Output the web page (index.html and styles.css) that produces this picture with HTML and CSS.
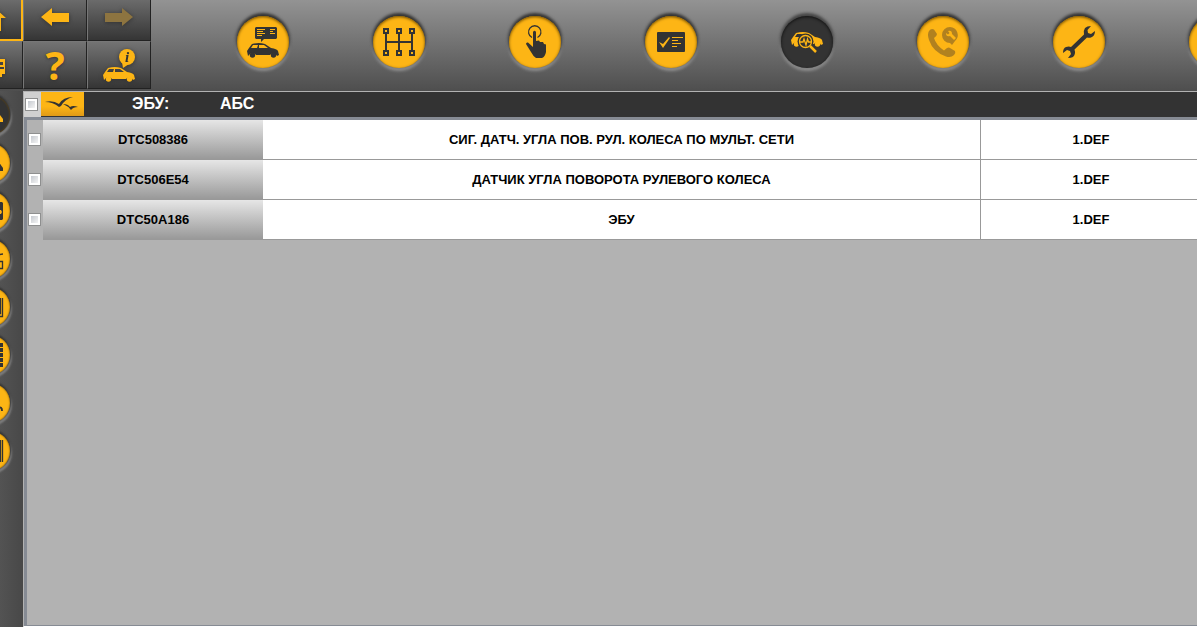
FILE: index.html
```html
<!DOCTYPE html>
<html lang="ru">
<head>
    <meta charset="UTF-8">
    <meta name="viewport" content="width=device-width, initial-scale=1.0">
    <title>ЭБУ: АБС</title>
    <link rel="stylesheet" href="styles.css">
</head>
<body>
    <svg class="defs" aria-hidden="true">
        <symbol id="car" viewBox="0 0 32 15">
            <path fill-rule="evenodd" d="M1 13 0 8 2 5 5 1Q12-1 18 1L24 5Q30 6 31 8L32 12 30 13A4 4 0 0 0 23 12L9 12A4 4 0 0 0 2 12ZM4 5H10L11 2H6ZM12 5H21L17 2H12Z"/>
            <circle cx="5.500" cy="12" r="2.700"/>
            <circle cx="26.500" cy="12" r="2.700"/>
        </symbol>
    </svg>

    <header class="topbar">
        <nav class="tools">
            <button class="tool selected" aria-label="home">
                <svg viewBox="0 0 64 48"><path d="M37 16 47 25H42V38H24V25H27Z"/></svg>
            </button>
            <button class="tool" aria-label="back">
                <svg viewBox="0 0 64 48"><path d="M18 24 29 15V20H46V29H29V33Z"/></svg>
            </button>
            <button class="tool" aria-label="forward" disabled>
                <svg viewBox="0 0 64 48"><path d="M46 24 35 15V20H18V29H35V33Z"/></svg>
            </button>
            <button class="tool" aria-label="print">
                <svg viewBox="0 0 64 48"><path fill-rule="evenodd" d="M22 18H46V33H43V36H40V33H22ZM38 21V24H44V21ZM41 26V28H45V26Z"/></svg>
            </button>
            <button class="tool help">?</button>
            <button class="tool" aria-label="info">
                <svg viewBox="0 0 64 48">
                    <use href="#car" x="16" y="26" width="32" height="15"/>
                    <circle cx="40" cy="16" r="8"/>
                    <path d="M35 21 36 27 42 23Z"/>
                    <text x="40" y="21" class="info-mark">i</text>
                </svg>
            </button>
        </nav>

        <nav class="modes">
            <button class="round" aria-label="car info">
                <svg viewBox="0 0 52 52">
                    <use href="#car" x="10" y="27" width="32" height="15"/>
                    <path d="M19 11H39L40 12V22L39 23H27L24 26V23H19L18 22V12Z"/>
                    <path class="line-accent" d="M20 13.500H28M20 15.500H26M20 17.500H28M20 19.500H25M33 13.500H38M33 15.500H36M33 17.500H38"/>
                </svg>
            </button>
            <button class="round" aria-label="gearbox">
                <svg viewBox="0 0 52 52">
                    <path class="line" d="M13 17V35M26 17V35M39 17V35M13 26H39"/>
                    <path fill-rule="evenodd" d="M10 12h6v6h-6zM12 14v2h2v-2zM23 12h6v6h-6zM25 14v2h2v-2zM36 12h6v6h-6zM38 14v2h2v-2zM10 34h6v6h-6zM12 36v2h2v-2zM23 34h6v6h-6zM25 36v2h2v-2zM36 34h6v6h-6zM38 36v2h2v-2z"/>
                </svg>
            </button>
            <button class="round" aria-label="commands">
                <svg viewBox="0 0 52 52">
                    <path class="line thin" d="M23 21.500A6.200 6.200 0 1 1 28.500 21.500"/>
                    <path d="M24 16Q25.500 13.500 27 16V25L30 24.500 31 26 34 26 35 28 37 28.500V36Q36 41 33 42H27Q24 40 22 36L17 28Q17 26 19 26.500L24 31Z"/>
                </svg>
            </button>
            <button class="round" aria-label="check list">
                <svg viewBox="0 0 52 52">
                    <rect x="12" y="16" width="28" height="20" rx="1"/>
                    <path class="accent" d="M14 26 18 28 24 21 25 22 18 32Z"/>
                    <path class="line-accent" d="M27 21.500H38M27 24.500H33M27 27.500H36M27 30.500H32"/>
                </svg>
            </button>
            <button class="round active" aria-label="diagnostics">
                <svg viewBox="0 0 52 52">
                    <use href="#car" x="10" y="16" width="32" height="15"/>
                    <circle class="lens" cx="24.500" cy="25.500" r="8"/>
                    <circle class="line thin" cx="24.500" cy="25.500" r="6"/>
                    <path class="line thin" d="M19 26H22L23 23 25 29 26.500 23 27.500 26H30"/>
                    <path class="line handle" d="M29 30 35 36"/>
                </svg>
            </button>
            <button class="round" aria-label="hotline" disabled>
                <svg viewBox="0 0 52 52">
                    <path d="M12 15Q14 12 17 13.500L20 18Q20 20 17 22 19 29 27 34.500L30 32Q32 31 33 32L38 35Q39 37 37 39 34 42 29 40.500 16 36 12 24 10 18 12 15Z"/>
                    <path d="M33 11A8 8 0 0 1 38 25L35 29 33 27A8 8 0 0 1 33 11Z"/>
                    <path class="accent" d="M29 17 31 18.500 32.500 17 31 15Q35 14 35 18L39 22 37 24 33 20Q29 21 29 17Z"/>
                </svg>
            </button>
            <button class="round" aria-label="repair">
                <svg viewBox="0 0 52 52">
                    <path d="M38 10 34.500 14 35 17 38 18 42 15Q42 20 38 21.500 36 22 34 21.500L21.500 33.500Q23 38 20 41 18 42 15 42L18 38 17 35 14 34 10 37Q10 32 13 31 16 30 18 31L31 18.500Q30 15 32 12 34 10 38 10Z"/>
                </svg>
            </button>
            <button class="round" aria-label="more">
                <svg viewBox="0 0 52 52"><rect x="18" y="16" width="16" height="20"/></svg>
            </button>
        </nav>
    </header>

    <div class="workspace">
        <aside class="sidebar">
            <button class="round small active" aria-label="section 1"><svg viewBox="0 0 40 40"><path d="M24 12 33 24V27H8Z"/></svg></button>
            <button class="round small" aria-label="section 2"><svg viewBox="0 0 40 40"><path d="M24 12 33 25V28H8Z"/></svg></button>
            <button class="round small" aria-label="section 3"><svg viewBox="0 0 40 40"><path fill-rule="evenodd" d="M8 11H32L33 12V28L32 29H8ZM29 19V23H31L32 21 31 19Z"/></svg></button>
            <button class="round small" aria-label="section 4"><svg viewBox="0 0 40 40"><path class="line thin" d="M29 19V17Q29 15 33 15M20 22.500H32.500V29.500H20"/></svg></button>
            <button class="round small" aria-label="section 5"><svg viewBox="0 0 40 40"><path class="line thin" d="M30.500 11V26.500H10M32.500 11V29.500H10"/></svg></button>
            <button class="round small" aria-label="section 6"><svg viewBox="0 0 40 40"><path class="line dots" d="M31.500 8V32"/></svg></button>
            <button class="round small" aria-label="section 7"><svg viewBox="0 0 40 40"><path class="line" d="M15 20 28 25Q32 23 32 28"/></svg></button>
            <button class="round small" aria-label="section 8"><svg viewBox="0 0 40 40"><path class="line thin" d="M30.500 9V31M32.500 9V31"/></svg></button>
        </aside>

        <main class="panel">
            <div class="ecu-bar">
                <label class="check-all"><input type="checkbox" aria-label="all"></label>
                <svg class="birds" viewBox="0 0 43 24">
                    <path d="M4 10Q12 8 18 12 22 5 32 5 24 7 20 14L18 15Q12 10 4 10ZM22 12Q27 12 29 15 32 13 37 15 32 15 30 18 27 14 22 12Z"/>
                </svg>
                <h1>ЭБУ:</h1>
                <span class="ecu-name">АБС</span>
            </div>
            <div class="list">
                <table>
                    <colgroup>
                        <col class="col-check">
                        <col class="col-code">
                        <col>
                        <col class="col-state">
                    </colgroup>
                    <tbody>
                        <tr>
                            <td class="check"><input type="checkbox" aria-label="DTC508386"></td>
                            <th scope="row">DTC508386</th>
                            <td>СИГ. ДАТЧ. УГЛА ПОВ. РУЛ. КОЛЕСА ПО МУЛЬТ. СЕТИ</td>
                            <td>1.DEF</td>
                        </tr>
                        <tr>
                            <td class="check"><input type="checkbox" aria-label="DTC506E54"></td>
                            <th scope="row">DTC506E54</th>
                            <td>ДАТЧИК УГЛА ПОВОРОТА РУЛЕВОГО КОЛЕСА</td>
                            <td>1.DEF</td>
                        </tr>
                        <tr>
                            <td class="check"><input type="checkbox" aria-label="DTC50A186"></td>
                            <th scope="row">DTC50A186</th>
                            <td>ЭБУ</td>
                            <td>1.DEF</td>
                        </tr>
                    </tbody>
                </table>
            </div>
        </main>
    </div>
</body>
</html>
```
FILE: styles.css
```css
* {
    box-sizing: border-box;
}
body {
    margin: 0;
    height: 100vh;
    display: flex;
    flex-direction: column;
    overflow: hidden;
    background-color: #4c4c4c;
    font-family: "Liberation Sans", Arial, sans-serif;
}
button {
    padding: 0;
    border: none;
    cursor: pointer;
}
.defs {
    display: none;
}

/* top bar */
.topbar {
    display: flex;
    flex: none;
    height: 91px;
    overflow: hidden;
    background: linear-gradient(#939393, #4e4e4e);
}
.tools {
    display: grid;
    flex: none;
    grid-template-columns: repeat(3, 64px);
    grid-auto-rows: 48px;
    margin-top: -7px;
    margin-left: -41px;
}
.tool {
    background: linear-gradient(#737373, #353535);
    border-top: 1px solid #777;
    border-left: 1px solid #777;
    border-right: 1px solid #222;
    border-bottom: 1px solid #222;
    fill: #fdb515;
}
.tool svg {
    display: block;
    width: 64px;
    height: 48px;
    margin: -1px;
    filter: drop-shadow(0 1px 2px #333);
}
.tool.selected {
    border: 2px solid #fdb515;
}
.tool.selected svg {
    margin: -2px;
}
.tool:disabled {
    fill: #8d7440;
}
.help {
    color: #fdb515;
    font: bold 40px "Noto Sans", sans-serif;
    line-height: 46px;
    text-shadow: 0 1px 3px #333;
}
.info-mark {
    fill: #333;
    font: italic bold 15px "Liberation Serif", serif;
    text-anchor: middle;
}
.modes {
    display: flex;
    gap: 84px;
    padding: 16px 0 0 86px;
}

/* round buttons */
.round {
    flex: none;
    width: 52px;
    height: 52px;
    border-radius: 50%;
    background-color: #fdb515;
    box-shadow: 0 -2px 3px 1px #333, 0 2px 3px 1px #909090, inset 0 1px 3px #704b00;
    color: #333;
    fill: currentColor;
}
.round svg {
    display: block;
    width: 100%;
    height: 100%;
}
.round.active {
    background-color: #333;
    color: #fdb515;
    box-shadow: 0 -2px 3px 1px #444, 0 2px 3px 1px #909090, inset 0 1px 3px #111;
}
.round:disabled {
    color: #b1811f;
}
.round.small {
    width: 40px;
    height: 40px;
    box-shadow: 0 -1px 2px 1px #333, 1px 2px 2px 1px #808080, inset 0 0 2px #704b00;
}
.line {
    fill: none;
    stroke: currentColor;
    stroke-width: 2;
}
.thin {
    stroke-width: 1.3;
}
.handle {
    stroke-width: 2.5;
}
.dots {
    stroke-width: 3;
    stroke-dasharray: 4 1;
}
.lens {
    fill: #333;
}
.accent {
    fill: #fdb515;
}
.line-accent {
    fill: none;
    stroke: #fdb515;
}

/* work area */
.workspace {
    display: flex;
    flex: 1;
    min-height: 0;
}
.sidebar {
    display: flex;
    flex: none;
    flex-direction: column;
    gap: 8px;
    width: 23px;
    padding-top: 4px;
    overflow: hidden;
    background: linear-gradient(to right, #535353, #484848);
}
.sidebar .round {
    margin-left: -30px;
}
.panel {
    display: flex;
    flex: 1;
    flex-direction: column;
    min-width: 0;
    border-top: 1px solid #b2b2b2;
    border-left: 1px solid #b2b2b2;
    border-bottom: 1px solid #fff;
}
.ecu-bar {
    display: flex;
    flex: none;
    height: 25px;
    background-color: #333;
    color: #fff;
    font-size: 16px;
    font-weight: bold;
    line-height: 24px;
}
.ecu-bar h1 {
    width: 88px;
    margin: 0 0 0 48px;
    font-size: 16px;
}
.check-all {
    display: flex;
    align-items: center;
    width: 17px;
    padding-left: 1px;
    background-color: #d0d0d0;
}
.birds {
    width: 43px;
    height: 24px;
    background: linear-gradient(#fdb515 60%, #e09a17);
    fill: #333;
}
.list {
    flex: 1;
    overflow: hidden;
    background-color: #b2b2b2;
    border-top: 3px solid #868b94;
    border-left: 3px solid #868b94;
    border-bottom: 1px solid #868b94;
}
input[type="checkbox"] {
    appearance: none;
    display: block;
    flex: none;
    width: 13px;
    height: 13px;
    margin: 0;
    border: 1px solid #8e8f8f;
    background: linear-gradient(135deg, #c6cad0, #f4f4f4) content-box, #fff;
    padding: 2px;
}
input[type="checkbox"]:checked {
    background-color: #fdb515;
}
table {
    width: calc(100% + 4px);
    table-layout: fixed;
    border-collapse: separate;
    border-spacing: 0;
    color: #000;
    font-size: 13px;
    font-weight: bold;
}
.col-check {
    width: 16px;
}
.col-code {
    width: 220px;
}
.col-state {
    width: 221px;
}
th, td {
    height: 40px;
    padding: 0;
    text-align: center;
    background-color: #fff;
    border-bottom: 1px solid #999;
}
td + td {
    border-left: 1px solid #999;
}
th {
    background: linear-gradient(#e6e6e6, #999);
}
td.check {
    padding-left: 1px;
    background-color: #b2b2b2;
    border-bottom-color: #b2b2b2;
}
```
